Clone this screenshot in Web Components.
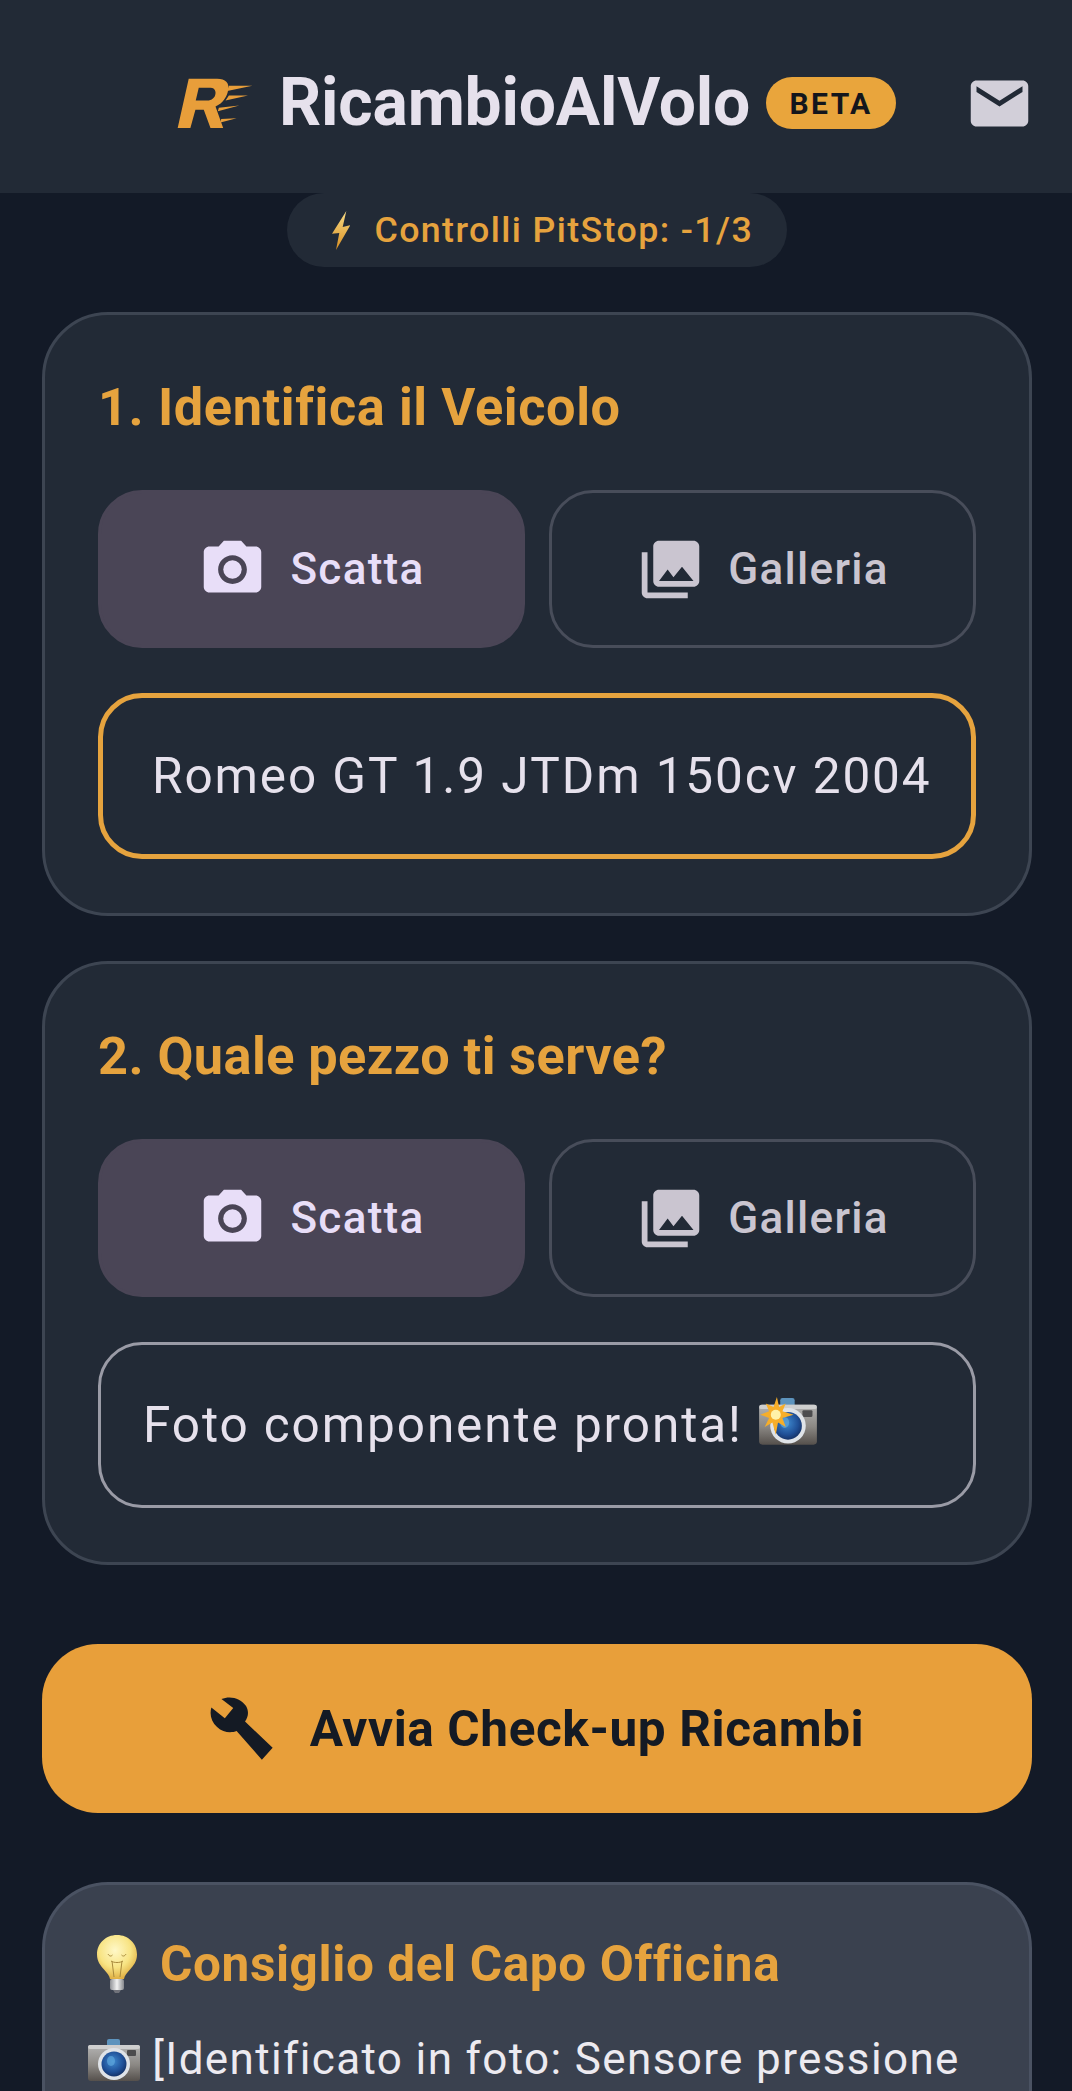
<!DOCTYPE html>
<html lang="it">
<head>
<meta charset="utf-8">
<title>RicambioAlVolo</title>
<style>
  html, body { margin: 0; height: 2091px; overflow: hidden; background: #131a27; }
  body { font-family: Roboto, "Liberation Sans", sans-serif; }
  main { display: flex; flex-direction: column; padding: 0 40px 0 42px; }
</style>
</head>
<body>
<app-header></app-header>
<main>
  <credits-pill>Controlli PitStop: -1/3</credits-pill>
  <step-card heading="1. Identifica il Veicolo">
    <action-button icon="camera" filled>Scatta</action-button>
    <action-button icon="gallery">Galleria</action-button>
    <field-box accent><span style="padding-left:7px">Romeo GT 1.9 JTDm 150cv 2004</span></field-box>
  </step-card>
  <step-card heading="2. Quale pezzo ti serve?" style="--track: 0.42px">
    <action-button icon="camera" filled>Scatta</action-button>
    <action-button icon="gallery">Galleria</action-button>
    <field-box>Foto componente pronta! <emoji-art name="flash" width="58" height="50" drop="6" style="margin-left:2px"></emoji-art></field-box>
  </step-card>
  <cta-button>Avvia Check-up Ricambi</cta-button>
  <tip-card heading="Consiglio del Capo Officina">
    <emoji-art name="camera" width="52" height="42" drop="7"></emoji-art> [Identificato in foto: Sensore pressione
  </tip-card>
</main>

<script>
const ICONS = {
  camera: `<circle cx="12" cy="12" r="3.2"/><path d="M9 2L7.17 4H4c-1.1 0-2 .9-2 2v12c0 1.1.9 2 2 2h16c1.1 0 2-.9 2-2V6c0-1.1-.9-2-2-2h-3.17L15 2H9zm3 15c-2.76 0-5-2.24-5-5s2.24-5 5-5 5 2.24 5 5-2.24 5-5 5z"/>`,
  gallery: `<path d="M22 16V4c0-1.1-.9-2-2-2H8c-1.1 0-2 .9-2 2v12c0 1.1.9 2 2 2h12c1.1 0 2-.9 2-2zm-11-4l2.03 2.71L16 11l4 5H8l3-4zM2 6v14c0 1.1.9 2 2 2h14v-2H4V6H2z"/>`,
  mail: `<path d="M20 4H4c-1.1 0-1.99.9-1.99 2L2 18c0 1.1.9 2 2 2h16c1.1 0 2-.9 2-2V6c0-1.1-.9-2-2-2zm0 4l-8 5-8-5V6l8 5 8-5v2z"/>`,
};

const iconSvg = (name, size) =>
  `<svg width="${size}" height="${size}" viewBox="0 0 24 24" fill="currentColor" aria-hidden="true">${ICONS[name]}</svg>`;

const CAMERA_ART = `
  <defs>
    <linearGradient id="body" x1="0" y1="0" x2="0" y2="1"><stop offset="0" stop-color="#b4b4b4"/><stop offset=".55" stop-color="#8b8884"/><stop offset="1" stop-color="#55504c"/></linearGradient>
    <radialGradient id="lens" cx=".45" cy=".4" r=".6"><stop offset="0" stop-color="#3f8ad0"/><stop offset=".7" stop-color="#1f4f96"/><stop offset="1" stop-color="#16346a"/></radialGradient>
  </defs>
  <path d="M19 8V2q0-2 2-2h9q2 0 2 2v6z" fill="#5d93bd"/>
  <rect x="0" y="6" width="52" height="36" rx="3" fill="url(#body)"/>
  <rect x="0" y="6" width="52" height="4" rx="2" fill="#cfcfcf"/>
  <rect x="39" y="11" width="9" height="6" rx="1" fill="#4c4c4e"/>
  <circle cx="26" cy="25" r="16" fill="#dfe3e8"/>
  <circle cx="26" cy="25" r="12.5" fill="url(#lens)"/>
  <ellipse cx="23" cy="22" rx="4" ry="5" fill="#5ea6dc" opacity=".7"/>`;

const EMOJI = {
  camera: `<svg viewBox="0 0 52 42" width="100%" height="100%" aria-hidden="true">${CAMERA_ART}</svg>`,
  flash: `<svg viewBox="0 0 52 45" width="100%" height="100%" aria-hidden="true">${CAMERA_ART}
    <polygon points="16,-1 18,8 24,5 21,12 31,15 21,18 24,26 17,22 15,33 12,22 5,26 9,18 1,15 9,12 6,5 13,8" fill="#f6ae2a"/>
    <circle cx="15" cy="15" r="4.5" fill="#fff2a8"/></svg>`,
  bulb: `<svg viewBox="0 0 40 58" width="100%" height="100%" aria-hidden="true">
    <defs><radialGradient id="glass" cx=".45" cy=".35" r=".65"><stop offset="0" stop-color="#fff8c8"/><stop offset=".6" stop-color="#f8e484"/><stop offset="1" stop-color="#e0b044"/></radialGradient>
    <linearGradient id="base" x1="0" y1="0" x2="1" y2="0"><stop offset="0" stop-color="#8f9196"/><stop offset=".5" stop-color="#f2f2f2"/><stop offset="1" stop-color="#85878c"/></linearGradient></defs>
    <path d="M20 0C8.5 0 0 8.5 0 19.5c0 7 3.5 11 7 15 3 3.5 5.5 6 6 9.5h14c.5-3.5 3-6 6-9.5 3.5-4 7-8 7-15C40 8.5 31.5 0 20 0z" fill="url(#glass)"/>
    <path d="M11 19c1.5 2.5 3 2.5 4.5 1M24.5 20c1.5 1.5 3 1.5 4.5-1M15 26l2 16M25 26l-2 16M14 26c3 2 9 2 12 0" stroke="#a98a3c" stroke-width="1" fill="none"/>
    <rect x="13" y="44" width="14" height="11" rx="2" fill="url(#base)"/>
    <path d="M16 55h8l-2 3h-4z" fill="#70727a"/></svg>`,
  bolt: `<svg viewBox="0 0 18.5 39" width="100%" height="100%" aria-hidden="true">
    <defs><linearGradient id="bolt" x1="0" y1="0" x2="0" y2="1"><stop offset="0" stop-color="#f9dc86"/><stop offset="1" stop-color="#d98e20"/></linearGradient></defs>
    <polygon points="14.3,0 0,22.7 7.3,22 4,39 18.3,14.3 10.7,16" fill="url(#bolt)"/></svg>`,
  wrench: `<svg viewBox="36 40 190 188" width="64" height="64" fill="currentColor" aria-hidden="true">
    <path d="M40 70L80 102L105 72L70 45C95 34 128 42 143 66C152 82 150 98 140 112L222 190L190 225L115 140C100 146 75 146 57 128C40 112 34 92 40 70Z"/></svg>`,
};

class EmojiArt extends HTMLElement {
  connectedCallback() {
    const w = this.getAttribute("width");
    const h = this.getAttribute("height");
    this.attachShadow({ mode: "open" }).innerHTML = `
      <style>
        :host { display: inline-block; width: ${w}px; height: ${h}px; vertical-align: -${this.getAttribute("drop")}px; }
        svg { display: block; overflow: visible; }
      </style>
      ${EMOJI[this.getAttribute("name")]}
    `;
  }
}

class AppHeader extends HTMLElement {
  connectedCallback() {
    this.attachShadow({ mode: "open" }).innerHTML = `
      <style>
        :host {
          display: flex;
          align-items: center;
          height: 193px;
          padding: 13px 38px 0 177px;
          box-sizing: border-box;
          background: #222a36;
          font-family: Roboto, sans-serif;
        }
        .logo { width: 77px; height: 52px; flex-shrink: 0; }
        .name {
          margin-left: 25px;
          font-size: 66px;
          font-weight: 700;
          letter-spacing: -0.2px;
          color: #e6e1ec;
          line-height: 1;
        }
        .beta {
          margin-left: 16px;
          width: 130px;
          height: 52px;
          display: flex;
          align-items: center;
          justify-content: center;
          border-radius: 26px;
          background: #e9a53c;
          color: #14161c;
          font-size: 30px;
          font-weight: 700;
          letter-spacing: 2.4px;
        }
        .mail { margin-left: auto; color: #d2cfd9; display: flex; }
      </style>
      <svg class="logo" viewBox="50 80 230 155" aria-label="Logo">
        <path fill="#e89e3a" fill-rule="evenodd" d="M85 85H170C195 85 207 98 203 118C200 138 188 158 165 168L188 232H150L130 178H105L90 232H52ZM115 112L106 150H145C158 148 166 138 165 125C164 116 158 112 150 112Z"/>
        <path fill="#e89e3a" d="M205 106L275 106L200 122ZM205 135L262 135L195 150ZM175 172L236 165L172 182ZM182 205L228 203L180 216Z"/>
      </svg>
      <span class="name">RicambioAlVolo</span>
      <span class="beta">BETA</span>
      <span class="mail">${iconSvg("mail", 69)}</span>
    `;
  }
}

class CreditsPill extends HTMLElement {
  connectedCallback() {
    this.attachShadow({ mode: "open" }).innerHTML = `
      <style>
        :host {
          display: flex;
          align-self: center;
          align-items: center;
          gap: 24px;
          height: 74px;
          padding: 0 34px 0 45px;
          border-radius: 37px;
          background: #222a36;
          color: #e6a33e;
          font-size: 35.75px;
          font-weight: 500;
          letter-spacing: 1.4px;
        }
        .bolt { width: 18.5px; height: 39px; display: block; }
      </style>
      <span class="bolt">${EMOJI.bolt}</span>
      <slot></slot>
    `;
  }
}

class StepCard extends HTMLElement {
  connectedCallback() {
    this.attachShadow({ mode: "open" }).innerHTML = `
      <style>
        :host {
          display: block;
          margin-top: 45px;
          border: 3px solid #3d4552;
          border-radius: 66px;
          background: #222a36;
          padding: 55px 53px 53px;
          height: 604px;
          box-sizing: border-box;
        }
        h2 {
          margin: 0 0 46px;
          height: 74px;
          display: flex;
          align-items: center;
          font-size: 52.25px;
          font-weight: 700;
          letter-spacing: var(--track, 0.6px);
          color: #e6a33e;
        }
        .grid { display: grid; grid-template-columns: 1fr 1fr; gap: 45px 24px; }
        ::slotted(field-box) { grid-column: 1 / -1; }
      </style>
      <h2>${this.getAttribute("heading")}</h2>
      <div class="grid"><slot></slot></div>
    `;
  }
}

class ActionButton extends HTMLElement {
  connectedCallback() {
    this.attachShadow({ mode: "open" }).innerHTML = `
      <style>
        :host {
          display: flex;
          align-items: center;
          justify-content: center;
          gap: 23px;
          height: 158px;
          box-sizing: border-box;
          border-radius: 44px;
          border: 3px solid #484d5a;
          color: #cac5d0;
          font-size: 44px;
          font-weight: 500;
          letter-spacing: 1.3px;
        }
        :host([filled]) { background: #4a4556; border-color: #4a4556; color: #e8def8; }
        svg { display: block; }
      </style>
      ${iconSvg(this.getAttribute("icon"), 69)}
      <slot></slot>
    `;
  }
}

class FieldBox extends HTMLElement {
  connectedCallback() {
    this.attachShadow({ mode: "open" }).innerHTML = `
      <style>
        :host {
          display: flex;
          align-items: center;
          height: 166px;
          box-sizing: border-box;
          padding: 0 42px;
          border: 3px solid #9a9ba6;
          border-radius: 44px;
          color: #e6e1ec;
          font-size: 49.5px;
          letter-spacing: 1.9px;
          white-space: nowrap;
        }
        :host([accent]) { border: 5px solid #e6a33e; }
      </style>
      <div><slot></slot></div>
    `;
  }
}

class CtaButton extends HTMLElement {
  connectedCallback() {
    this.attachShadow({ mode: "open" }).innerHTML = `
      <style>
        :host {
          display: flex;
          align-items: center;
          justify-content: center;
          gap: 36px;
          height: 169px;
          margin-top: 79px;
          border-radius: 56px;
          background: #e89f3a;
          color: #141a24;
          font-size: 49.5px;
          font-weight: 700;
          letter-spacing: 0.6px;
        }
        svg { display: block; }
      </style>
      ${EMOJI.wrench}
      <slot></slot>
    `;
  }
}

class TipCard extends HTMLElement {
  connectedCallback() {
    this.attachShadow({ mode: "open" }).innerHTML = `
      <style>
        :host {
          display: block;
          margin-top: 69px;
          height: 300px;
          padding: 50px 44px 0 43px;
          box-sizing: border-box;
          border: 3px solid #4a5262;
          border-bottom: 0;
          border-radius: 66px 66px 0 0;
          background: #3a414f;
        }
        h3 {
          margin: 0 0 36px 9px;
          height: 58px;
          display: flex;
          align-items: center;
          gap: 23px;
          font-size: 49.5px;
          font-weight: 700;
          letter-spacing: 0.6px;
          color: #e6a33e;
        }
        .bulb { width: 40px; height: 58px; display: block; }
        p { margin: 0; font-size: 44px; line-height: 60px; letter-spacing: 1.37px; color: #eceaf0; white-space: nowrap; }
      </style>
      <h3><span class="bulb">${EMOJI.bulb}</span>${this.getAttribute("heading")}</h3>
      <p><slot></slot></p>
    `;
  }
}

customElements.define("emoji-art", EmojiArt);
customElements.define("app-header", AppHeader);
customElements.define("credits-pill", CreditsPill);
customElements.define("step-card", StepCard);
customElements.define("action-button", ActionButton);
customElements.define("field-box", FieldBox);
customElements.define("cta-button", CtaButton);
customElements.define("tip-card", TipCard);
</script>
</body>
</html>
